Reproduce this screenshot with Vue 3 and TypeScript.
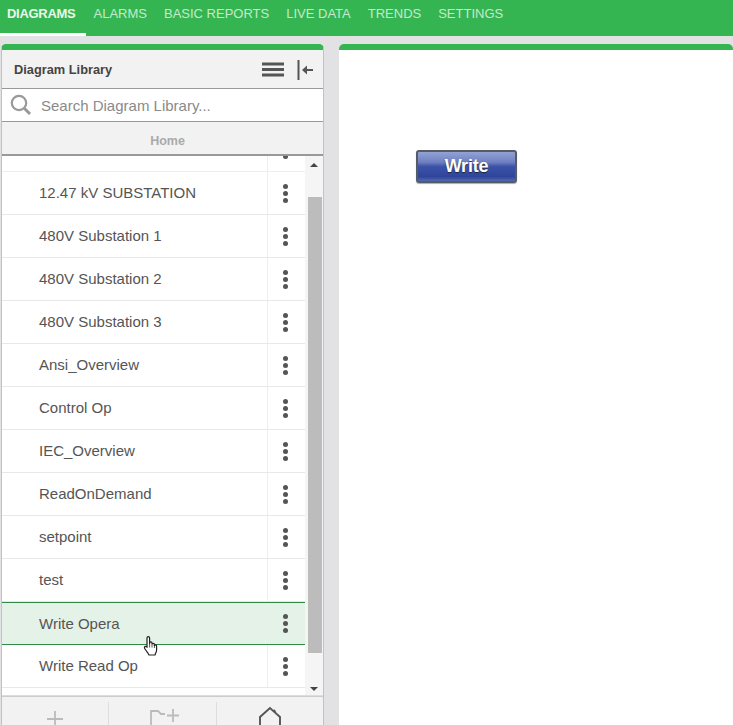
<script setup lang="ts">
const tabs = ['DIAGRAMS', 'ALARMS', 'BASIC REPORTS', 'LIVE DATA', 'TRENDS', 'SETTINGS']
const rows = ['12.47 kV SUBSTATION', '480V Substation 1', '480V Substation 2', '480V Substation 3', 'Ansi_Overview', 'Control Op', 'IEC_Overview', 'ReadOnDemand', 'setpoint', 'test', 'Write Opera', 'Write Read Op']
</script>

<template>
  <div class="page">
    <nav class="nav">
      <a v-for="(t, i) in tabs" :key="t" class="tab" :class="{ on: i === 0 }">{{ t }}</a>
    </nav>
    <div class="main">
      <section class="lib">
        <header class="head">
          <span class="title">Diagram Library</span>
          <svg class="burger" width="23" height="16" viewBox="0 0 23 16"><path d="M0 2h22M0 7.5h22M0 13h22" stroke="#555" stroke-width="2.8" fill="none"/></svg>
          <svg class="collapse" width="17" height="20" viewBox="0 0 17 20"><path d="M1.5 0v20" stroke="#555" stroke-width="2" fill="none"/><path d="M16 10H8" stroke="#555" stroke-width="2" fill="none"/><path d="M5 10l5-4.5v9Z" fill="#555"/></svg>
        </header>
        <div class="search">
          <svg width="22" height="22" viewBox="0 0 22 22"><circle cx="9" cy="9" r="7.2" stroke="#999" stroke-width="2.2" fill="none"/><path d="M14.5 14.5l5.5 5.5" stroke="#999" stroke-width="3" fill="none"/></svg>
          <span class="ph">Search Diagram Library...</span>
        </div>
        <div class="crumb">Home</div>
        <div class="listwrap">
          <div class="list">
            <div class="stub"><span class="cell"><i class="dots"></i></span></div>
            <div v-for="r in rows" :key="r" class="row" :class="{ hot: r === 'Write Opera' }">
              <span class="name">{{ r }}</span>
              <span class="cell"><i class="dots"></i></span>
            </div>
          </div>
          <div class="scroll">
            <span class="up"></span>
            <div class="thumb"></div>
            <span class="down"></span>
          </div>
          <svg class="hand" width="17" height="22" viewBox="0 0 17 22"><path d="M5 12V3a1.3 1.3 0 0 1 2.6 0v6V8a1.2 1.2 0 0 1 2.4 0v1.5a1.2 1.2 0 0 1 2.4 0V11a1.1 1.1 0 0 1 2.2 0v4c0 2-1 3-1.6 5H7c-.6-1.6-2-3-4-6-.7-1.2-1-2 0-2.6.8-.4 1.5.2 2 .6Z" fill="#fff" stroke="#222" stroke-width="1.2"/><path d="M7.6 9v3.5M10 9.5v3M12.4 10.5v2.5" stroke="#222" stroke-width=".8" fill="none"/></svg>
        </div>
        <footer class="foot">
          <div class="act"><svg width="20" height="20" viewBox="0 0 20 20"><path d="M10 2v16M2 10h16" stroke="#bbb" stroke-width="1.8" fill="none"/></svg></div>
          <div class="act"><svg class="folder" width="32" height="22" viewBox="0 0 32 22"><path d="M2 22V2h7l3 3h4" stroke="#bbb" stroke-width="1.8" fill="none"/><path d="M24 0v13M18 6.5h12" stroke="#bbb" stroke-width="1.8" fill="none"/></svg></div>
          <div class="act"><svg class="home" width="24" height="22" viewBox="0 0 24 22"><path d="M2 22V11L12 2l4 3.6V4l1.5 3 4.5 4v11" stroke="#555" stroke-width="1.9" fill="none"/></svg></div>
        </footer>
      </section>
      <section class="canvas">
        <button class="write">Write</button>
      </section>
    </div>
  </div>
</template>

<style>
html, body { margin: 0; height: 100%; overflow: hidden; }
</style>

<style scoped>
.page { width: 733px; height: 725px; overflow: hidden; background: #e2e2e4; font-family: "Liberation Sans", Arial, sans-serif; display: flex; flex-direction: column; }
.nav { height: 36px; background: #35b552; display: flex; flex: none; box-sizing: border-box; }
.tab { color: #c4eacc; font-size: 13px; line-height: 27px; padding: 0 9px 0 8px; height: 36px; box-sizing: border-box; }
.tab.on { color: #eaf7ec; font-weight: bold; border-bottom: 3px solid #fff; width: 85.5px; padding-left: 7px; white-space: nowrap; letter-spacing: -.3px; }
.main { flex: 1; display: flex; min-height: 0; padding-top: 8px; padding-left: 1px; gap: 15px; }
.lib { width: 321px; flex: none; border: 1px solid #c2c2c2; border-top: 6px solid #35b552; border-radius: 5px 5px 0 0; background: #f2f2f2; display: flex; flex-direction: column; }
.head { height: 37px; padding-top: 1px; display: flex; align-items: center; padding-left: 12px; flex: none; }
.title { font-size: 12.8px; font-weight: bold; color: #444; flex: 1; }
.burger { margin-right: 12px; }
.collapse { margin-right: 9px; }
.search { height: 32px; background: #fff; border-top: 1px solid #999; border-bottom: 1px solid #999; display: flex; align-items: center; gap: 9px; padding-left: 8px; flex: none; }
.ph { font-size: 15px; color: #8a8a8a; }
.crumb { height: 27px; padding: 5px 0 0 10px; line-height: 29px; text-align: center; font-size: 12.5px; font-weight: bold; color: #aaa; border-bottom: 2px solid #999; flex: none; }
.listwrap { flex: none; height: 540px; display: flex; background: #fff; position: relative; border-bottom: 1px solid #ddd; box-sizing: border-box; }
.list { flex: 1; overflow: hidden; min-width: 0; }
.stub { height: 15px; border-bottom: 1px solid #eee; display: flex; justify-content: flex-end; overflow: hidden; }
.row { height: 42px; border-bottom: 1px solid #e8e8e8; display: flex; align-items: center; }
.name { flex: 1; padding-left: 37px; padding-bottom: 1px; font-size: 15px; color: #555; }
.cell { width: 38px; align-self: stretch; border-left: 1px solid #eee; display: flex; align-items: center; justify-content: center; box-sizing: border-box; flex: none; padding-right: 3px; }
.stub .cell { height: 15px; align-items: flex-start; }
.dots { display: block; width: 5px; height: 5px; border-radius: 50%; background: #555; box-shadow: 0 -7px 0 #555, 0 7px 0 #555; }
.stub .dots { margin-top: -9px; }
.row.hot { height: 41px; background: #e5f2e7; border-top: 1px solid #2e8b47; border-bottom: 1px solid #2e8b47; }
.scroll { width: 18px; flex: none; display: flex; flex-direction: column; align-items: center; background: #f5f5f5; }
.up, .down { flex: none; width: 0; height: 0; border-left: 4px solid transparent; border-right: 4px solid transparent; }
.up { border-bottom: 4px solid #444; margin: 7px 0 30px; }
.down { border-top: 4px solid #444; margin: auto 0 4px; }
.thumb { flex: none; height: 456px; width: 14px; margin-left: 3px; margin-right: 1px; background: #bcbcbc; }
.hand { position: absolute; left: 140px; top: 479px; }
.foot { height: 40px; display: flex; border-top: 1px solid #ccc; background: #f2f2f2; flex: none; box-sizing: border-box; }
.act { flex: 1; border-right: 1px solid #ddd; margin-top: 5px; display: flex; justify-content: center; padding-top: 7px; overflow: hidden; }
.act:last-child { border: 0; padding-top: 4px; }
.folder { margin-left: 5px; }
.canvas { flex: 1; border-top: 6px solid #35b552; border-radius: 5px 5px 0 0; background: #fff; position: relative; padding: 100px 0 0 77px; }
.write { display: block; width: 101px; height: 33px; padding: 0; border: 2px solid #555c66; border-radius: 3px; background: linear-gradient(#93a2d3 0, #6f80c2 35%, #3c53a8 50%, #2e459b 85%, #5568ae 100%); color: #fff; font: bold 18px "Liberation Sans", Arial, sans-serif; letter-spacing: -.2px; text-shadow: 0 1px 1px #223; box-shadow: 0 1px 1px #aaa; }
</style>
